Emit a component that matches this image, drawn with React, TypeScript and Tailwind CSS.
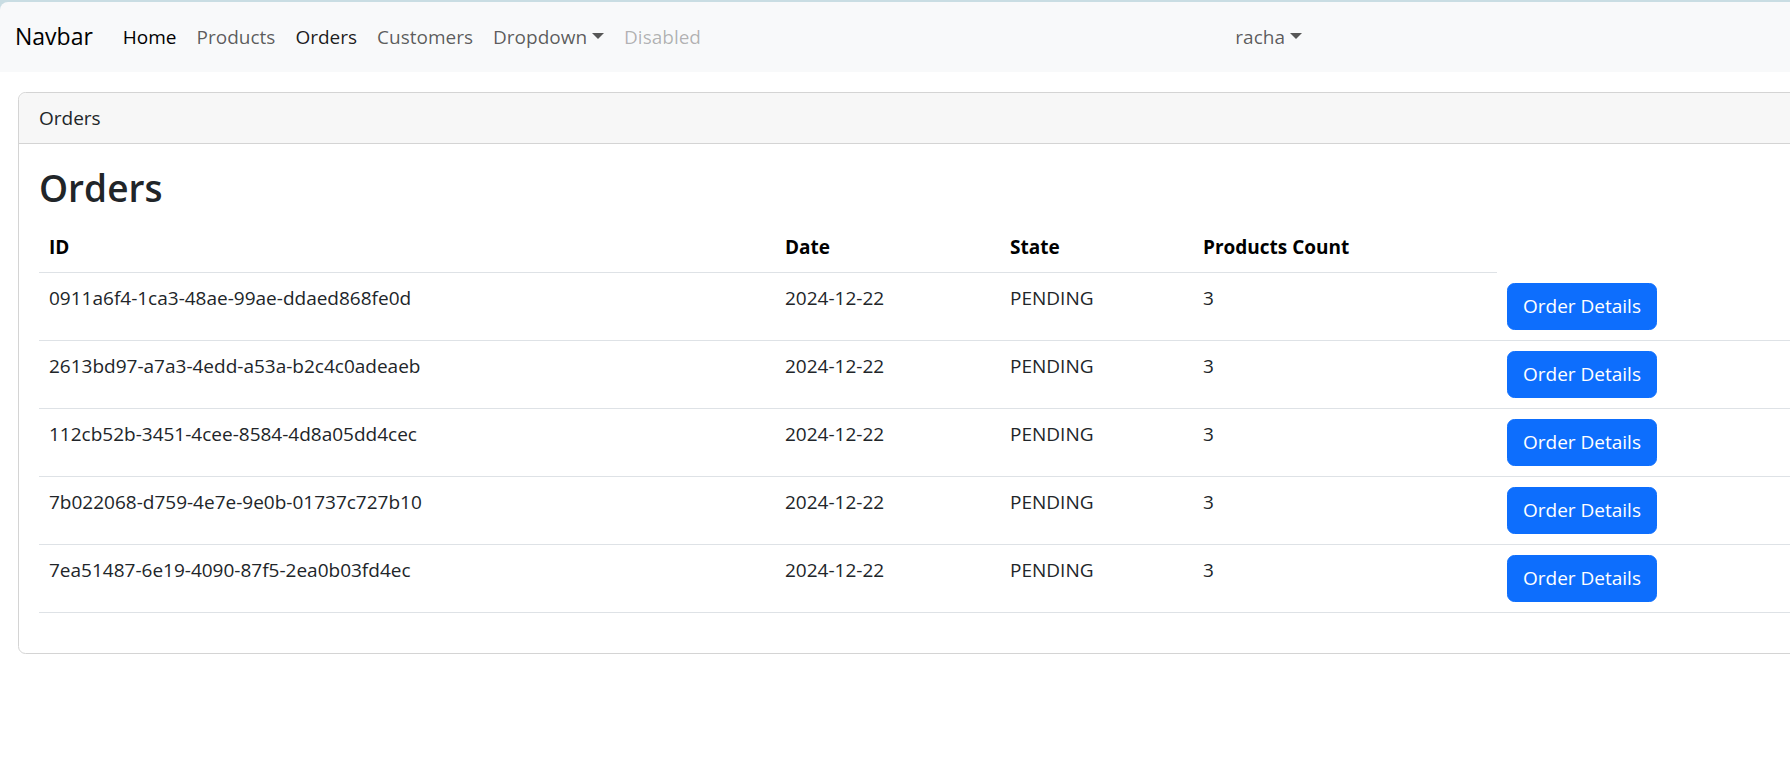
const orders = [
  { id: "0911a6f4-1ca3-48ae-99ae-ddaed868fe0d", date: "2024-12-22", state: "PENDING", count: 3 },
  { id: "2613bd97-a7a3-4edd-a53a-b2c4c0adeaeb", date: "2024-12-22", state: "PENDING", count: 3 },
  { id: "112cb52b-3451-4cee-8584-4d8a05dd4cec", date: "2024-12-22", state: "PENDING", count: 3 },
  { id: "7b022068-d759-4e7e-9e0b-01737c727b10", date: "2024-12-22", state: "PENDING", count: 3 },
  { id: "7ea51487-6e19-4090-87f5-2ea0b03fd4ec", date: "2024-12-22", state: "PENDING", count: 3 },
];

function Caret() {
  return (
    <span className="ml-[5px] inline-block h-0 w-0 border-x-[6px] border-t-[6px] border-x-transparent border-t-current align-[5px]" />
  );
}

export default function App() {
  return (
    <div
      className="min-h-screen w-full overflow-hidden bg-white text-[19px] text-[#212529]"
      style={{ fontFamily: '"Segoe UI", "Open Sans", sans-serif' }}
    >
      {/* browser top edge + navbar */}
      <div className="bg-[#c9dde3] pt-[2px]">
        <nav className="flex h-[70px] items-center rounded-tl-[8px] bg-[#f8f9fa] px-[15px]">
          <a className="mr-[20px] py-[6px] text-[23px] leading-[37.5px] text-black">Navbar</a>
          <ul className="flex items-center leading-[30px]">
            <li className="px-[10px] py-[10px] text-black">Home</li>
            <li className="px-[10px] py-[10px] text-black/65">Products</li>
            <li className="px-[10px] py-[10px] text-black/90">Orders</li>
            <li className="px-[10px] py-[10px] text-black/65">Customers</li>
            <li className="px-[10px] py-[10px] text-black/65">
              Dropdown
              <Caret />
            </li>
            <li className="px-[10px] py-[10px] text-black/30">Disabled</li>
          </ul>
          <div className="ml-auto mr-[463px] px-[10px] py-[10px] leading-[30px] text-black/65">
            racha
            <Caret />
          </div>
        </nav>
      </div>

      {/* card */}
      <div className="ml-[18px] mt-[20px] w-[2200px] rounded-[7.5px] border border-[#d4d4d4]">
        <div className="rounded-t-[7.5px] border-b border-[#d4d4d4] bg-[#f7f7f7] px-[20px] py-[10px] leading-[30px]">
          Orders
        </div>
        <div className="p-[20px]">
          <h2 className="mb-[10px] text-[37px] leading-[48px] font-semibold">Orders</h2>
          <table className="mb-[20px] w-full table-fixed leading-[30px]">
            <colgroup>
              <col className="w-[736px]" />
              <col className="w-[225px]" />
              <col className="w-[193px]" />
              <col className="w-[304px]" />
              <col />
            </colgroup>
            <thead>
              <tr className="text-left">
                <th className="border-b border-[#dee2e6] p-[10px] align-top font-bold text-black">ID</th>
                <th className="border-b border-[#dee2e6] p-[10px] align-top font-bold text-black">Date</th>
                <th className="border-b border-[#dee2e6] p-[10px] align-top font-bold text-black">State</th>
                <th className="border-b border-[#dee2e6] p-[10px] align-top font-bold text-black">Products Count</th>
              </tr>
            </thead>
            <tbody>
              {orders.map((o) => (
                <tr key={o.id}>
                  <td className="border-b border-[#dee2e6] p-[10px] align-top">{o.id}</td>
                  <td className="border-b border-[#dee2e6] p-[10px] align-top">{o.date}</td>
                  <td className="border-b border-[#dee2e6] p-[10px] align-top">{o.state}</td>
                  <td className="border-b border-[#dee2e6] p-[10px] align-top">{o.count}</td>
                  <td className="border-b border-[#dee2e6] p-[10px] align-top">
                    <button className="block rounded-[7.5px] border border-[#0d6efd] bg-[#0d6efd] px-[15px] py-[7.5px] leading-[30px] text-white">
                      Order Details
                    </button>
                  </td>
                </tr>
              ))}
            </tbody>
          </table>
        </div>
      </div>
    </div>
  );
}
